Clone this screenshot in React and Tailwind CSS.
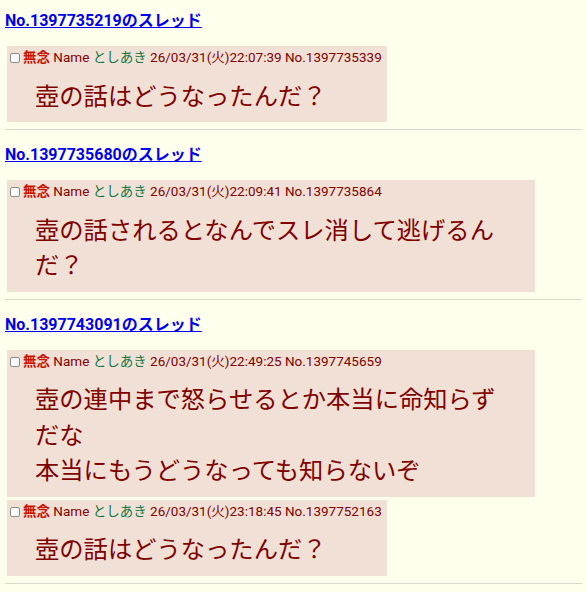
import React from "react";

const threads = [
  {
    no: "1397735219",
    posts: [
      { date: "26/03/31(火)22:07:39", no: "1397735339", lines: ["壺の話はどうなったんだ？"] },
    ],
  },
  {
    no: "1397735680",
    posts: [
      { date: "26/03/31(火)22:09:41", no: "1397735864", lines: ["壺の話されるとなんでスレ消して逃げるんだ？"] },
    ],
  },
  {
    no: "1397743091",
    posts: [
      {
        date: "26/03/31(火)22:49:25",
        no: "1397745659",
        lines: ["壺の連中まで怒らせるとか本当に命知らずだな", "本当にもうどうなっても知らないぞ"],
      },
      { date: "26/03/31(火)23:18:45", no: "1397752163", lines: ["壺の話はどうなったんだ？"] },
    ],
  },
];

function Post({ p }) {
  return (
    <div className="max-w-[528px] bg-[#f0e0d6] pt-[2px] pb-[2px] pl-[3px] pr-[5px]">
      <div className="h-[18px] text-[13.5px] leading-[18px] whitespace-nowrap text-[#800000]">
        <span className="inline-block align-[-1px] w-[10px] h-[10px] border border-[#8a8a8a] rounded-[2px] bg-white" />
        <span className="ml-[3px] font-bold text-[#cc1105]">無念</span> Name{" "}
        <span className="text-[#117743]">としあき</span> {p.date} No.{p.no}
      </div>
      <div
        className="mt-[10.5px] mb-[8px] ml-[25px] mr-[32px] text-[24.3px] leading-[35.5px] text-[#800000]"
        style={{ fontFamily: "'Noto Sans CJK JP', sans-serif" }}
      >
        {p.lines.map((l, i) => (
          <div key={i}>{l}</div>
        ))}
      </div>
    </div>
  );
}

export default function App() {
  return (
    <div
      className="min-h-[592px] bg-[#ffffee] px-[5px] pt-[11px]"
      style={{ fontFamily: "Roboto, 'Noto Sans CJK JP', sans-serif" }}
    >
      {threads.map((t, i) => (
        <div key={t.no} className={i === 0 ? "" : "pt-[15px]"}>
          <div className="leading-[20px]">
            <a href="#" className="text-[16px] font-bold text-[#0000ee] underline">
              No.{t.no}のスレッド
            </a>
          </div>
          <div className="mt-[15px] pl-[2px] flex flex-col items-start gap-[3px]">
            {t.posts.map((p) => (
              <Post key={p.no} p={p} />
            ))}
          </div>
          <hr className="mt-[7px] border-0 border-t border-[#d8d8cc]" />
        </div>
      ))}
    </div>
  );
}
